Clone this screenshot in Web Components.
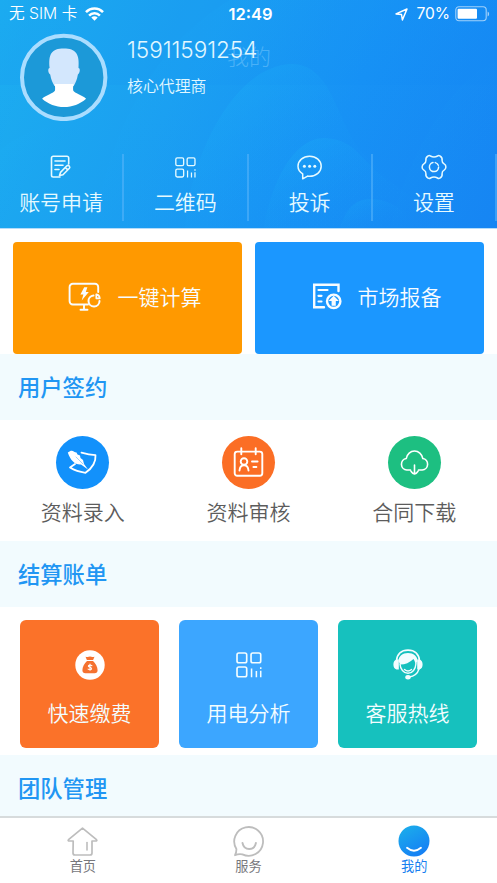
<!DOCTYPE html>
<html lang="zh-CN">
<head>
<meta charset="utf-8">
<title>我的</title>
<style>
html,body{margin:0;padding:0;background:#fff}
body{font-family:"Liberation Sans","Noto Sans CJK SC",sans-serif;width:497px;height:883px;overflow:hidden}
</style>
</head>
<body>
<account-page></account-page>
<script>
const svg = (w, h, vb, body) => `<svg width="${w}" height="${h}" viewBox="${vb}" fill="none" stroke="currentColor" stroke-linecap="round" stroke-linejoin="round">${body}</svg>`;

const qr = `<g stroke-width="1.3"><rect x=".8" y=".8" width="7.6" height="7.6" rx="1.4"/><rect x="11.8" y=".8" width="7.6" height="7.6" rx="1.4"/><rect x=".8" y="11.8" width="7.6" height="7.6" rx="1.4"/></g><path stroke-width="1.2" stroke-linecap="butt" d="M12.2 13v6.8M16 15v4.8M19.4 14.8v5M19.4 12v1.4"/>`;

const ICONS = {
  wifi: svg(19, 14, '0 0 19 14', `<g stroke-width="2.5" stroke-linecap="butt"><path d="M1 5.2C5.6.2 13.4.2 18 5.2"/><path d="M4.1 8.6c3-3.2 7.8-3.2 10.8 0"/></g><path d="M9.5 13.7 6.3 10.5c1.8-1.7 4.6-1.7 6.4 0z" fill="currentColor" stroke="none"/>`),
  locate: svg(13, 13, '0 0 13 13', `<path stroke-width="1.5" d="M1 5.9 12 1 7.4 12 6.5 6.5z"/>`),
  battery: svg(36, 16, '0 0 36 16', `<rect x=".8" y=".8" width="30.4" height="14" rx="3.2" stroke-width="1.1" opacity=".6"/><rect x="2.6" y="2.8" width="19.4" height="10" rx="1" fill="currentColor" stroke="none"/><path d="M32.6 5.4c2 .7 2 4.3 0 5z" fill="currentColor" stroke="none" opacity=".6"/>`),
  avatar: svg(88, 88, '0 0 88 88', `<circle cx="43.7" cy="44.400" r="41.7" fill="#1c99d8" stroke="#aaddff" stroke-width="4"/><g stroke="none" transform="translate(0 1)"><path fill="#d3e7fd" d="M29.6 34c-1.4-14 2-19.5 14.2-19.5S59.7 20 58.5 34c1.9.2 1.7 4.6-.6 6.6-1 5.4-2.3 8.4-4.2 11.4H34.5c-2-3-3.3-6-4.3-11.4-2.4-2-2.5-6.400-.6-6.600z"/><path fill="#fff" d="M34.500 50h19.200c-.6 2-.8 4.500-.5 6.600 1.400 3 8.800 4.200 12.900 8.200-6.200 5.500-13.600 8.300-22 8.300s-15.700-2.800-22-8.300c4.200-4 11.500-5.200 12.900-8.200.3-2 .1-4.600-.5-6.600z"/></g>`),
  form: svg(22, 24, '0 0 22 24', `<g stroke-width="1.6"><path d="M10 22H3.200A1.700 1.700 0 0 1 1.500 20.300V3A1.700 1.700 0 0 1 3.200 1.300H17A1.700 1.700 0 0 1 18.700 3v6"/><path d="M5 6h10M5 10.200h8M5 14.500h4"/><path d="m10.500 17.400 6.400-6.600q1.200-1 2.300.2t.2 2.300L13 19.700l-3.500.9zM15.500 12.700l2.300 2.100"/></g>`),
  qr: svg(21, 21, '0 0 20.4 20.4', qr),
  qrBig: svg(26, 26, '0 0 20.4 20.4', qr),
  chat: svg(25, 25, '0 0 25 25', `<path stroke-width="1.5" d="M5.700 18.900C2.800 17 1 14.500 1 11.200 1 5.600 6 1.200 12.600 1.200S24.200 5.600 24.200 11.200 19.200 21.300 12.600 21.300q-1 0-2-.2l-4.900 2.700z"/><g fill="currentColor" stroke="none"><circle cx="7.400" cy="11.300" r="1.500"/><circle cx="12.600" cy="11.300" r="1.500"/><circle cx="17.800" cy="11.300" r="1.500"/></g>`),
  gear: svg(26, 26, '0 0 26 26', `<g stroke-width="1.500"><path d="M9.500 2Q8.200 1.200 7 2 4.400 3.500 4.900 6.500 5 8.700 2.900 9.800 1.200 10.800 1.100 13T2.900 16.200Q5 17.300 4.900 19.500 4.400 22.500 7 24q1.200.8 2.500 0 3.500-2 7 0 1.300.8 2.500 0 2.600-1.500 2.100-4.500-.1-2.200 2-3.300 1.700-1 1.800-3.200t-1.800-3.200q-2.100-1.100-2-3.300Q21.600 3.500 19 2q-1.200-.8-2.500 0-3.500 2-7 0z"/><path d="M12 8.500A4.600 4.600 0 1 0 17.600 13M14.300 8.600A4.600 4.600 0 0 1 17.300 11.300"/></g>`),
  calc: svg(33, 30, '0 0 33 30', `<g stroke-width="1.900"><path d="M20 22.500H4.800A3.200 3.200 0 0 1 1.600 19.300V5A3.200 3.200 0 0 1 4.800 1.800H27A3.200 3.200 0 0 1 30.200 5v5M16 23v4.500M12.500 27.800h7"/><path stroke-width="2" d="M25.500 13.500a5.500 5.500 0 1 0 6 5.500"/><path stroke-width="1.700" d="M28.300 12.300v4h3.500a4.500 4.500 0 0 0-3.500-4z"/></g><path fill="currentColor" stroke="none" d="M16.200 5.300h3.200l-1.600 4.600h3L13.700 18.500l1.700-6h-3z"/>`),
  report: svg(30, 27, '0 0 30 27', `<g stroke-width="2.400"><path stroke-linejoin="miter" d="M12 24.300H2.200V1.800H26.500V8"/><path stroke-width="2.200" d="M6.500 7H15.500M6.500 12.800h3M6.500 18.500h3"/><circle cx="21.700" cy="18.300" r="6.700"/></g><path fill="currentColor" stroke="none" d="m21.700 12.700 5.200 5.200h-3.100v4.800h-4.200v-4.800h-3.100z"/>`),
  quill: svg(31, 27, '0 0 31 27', `<path stroke-width="1.800" d="M14.500 3.600Q22 5.900 28.500 6.200C29 13 25.500 18.800 18.500 23.800Q9.500 22.500 3 18.500l5-3.500"/><path fill="currentColor" stroke="none" d="M.8 3.500 3.800 1.800C6 1 7.500 3.500 9.500 3.500l1 2 2.500 1 .5 2.500 2.500 2 1 4 4 5.500-7-5c-6 .5-10.500-4-13.200-12z"/><path stroke="#1291fb" stroke-width=".4" d="m9 8 7 7"/>`),
  badge: svg(31, 31, '0 0 31 31', `<rect x="1.700" y="4.600" width="27.600" height="24.200" rx="2.500" stroke-width="1.900"/><path stroke-width="1.900" d="M8.300 1.300v6M22.700 1.300v6M19 14.500h5.600M20.400 20h3"/><circle cx="11" cy="14.500" r="3.300" stroke-width="1.900"/><path stroke-width="1.900" d="M6.500 23.500c.3-3.600 2-5.300 4.500-5.300s4.200 1.700 4.500 5.300"/>`),
  cloud: svg(29, 26, '0 0 29 26', `<path stroke-width="1.600" d="M10.500 20H6.800A5.800 5.800 0 0 1 6.300 8.500C7 4 10.500 1 14.500 1S22 4 22.800 8.500A5.800 5.800 0 0 1 22.200 20H18.500M14.500 15v8.500M11 21.200q1.500 2.300 3.500 2.800 2-.5 3.500-2.800"/>`),
  money: svg(30, 30, '0 0 30 30', `<circle cx="15" cy="15" r="14.700" fill="#fff" stroke="none"/><path fill="#f57230" stroke="none" d="M10.500 6.700q2.200.8 4.500-.1 2.300.9 4.500.1l-1.400 3.200h-6.200zM12 11h6c2.600 2.300 4.600 6 4.600 9.300 0 2-1.100 2.900-3 2.900h-9.200c-1.900 0-3-.9-3-2.900C7.400 17 9.400 13.300 12 11z"/><path stroke="#fff" stroke-width="1.100" d="M16.900 15.700q-1.900-1.300-3.300-.2c-1.300 2 3.500 1.600 3 3.400-.5 1.200-2.200 1-3.500.2M15 14v6.200"/>`),
  support: svg(30, 31, '0 0 30 31', `<path stroke-width="1.800" d="M3.500 12C4 5 8.500 1.200 15 1.200S26 5 26.500 12"/><g fill="currentColor" stroke="none"><path d="M5.500 12.500C5.500 7 9.500 4 15 4s9.500 3 9.500 8.500L22.500 15q-.5-3-2-5-6 5.500-13 5.500z"/><path d="M5.800 10.500v10H3.500Q.4 19.500.4 15.500t3.100-5zM24.200 10.500v10h2.300q3.100-1 3.100-5t-3.100-5z"/><ellipse cx="15" cy="28.200" rx="2.700" ry="2.200"/></g><path stroke-width="1.400" d="M7 15c.3 5 3.500 9.300 8 9.300S22.600 20 23 14.500M26 20c-1.400 4.700-4.500 7.300-10 8M11.500 20.500q3.500 3 7 0"/>`),
  home: svg(31, 29, '0 0 31 29', `<path stroke-width="1.700" d="M6.200 14H1.700q-1-.4-.2-1.300L15.500 1.200l14 11.500q.8.900-.2 1.300H25v12q0 2-2 2H8q-2 0-2-2z"/><path stroke-width="1.600" d="M20 15.500v7.500"/>`),
  service: svg(32, 32, '0 0 32 32', `<path stroke-width="1.800" d="M3.400 24A14.400 14.400 0 1 1 9.400 29.400Q5.700 28.700 2 30.200 3.500 27.400 3.400 24z"/><path stroke-width="1.900" d="M9.500 18c.8 4 3.300 6 6.700 6s6-2 6.700-6"/>`),
  mine: svg(32, 32, '0 0 32 32', `<defs><linearGradient id="g" x1=".2" y1="0" x2=".75" y2="1"><stop stop-color="#1badeb"/><stop offset="1" stop-color="#157df5"/></linearGradient></defs><circle cx="16" cy="16" r="15.500" fill="url(#g)" stroke="none"/><path stroke="#fff" stroke-width="1.800" d="M9 22.800q7 5.800 14 0"/>`)
};

const define = (name, render) => customElements.define(name, class extends HTMLElement {
  constructor() { super(); this.attachShadow({ mode: 'open' }); }
  connectedCallback() { this.shadowRoot.innerHTML = render(this); }
});

define('app-icon', el => `<style>:host{display:inline-flex;flex:none}svg{display:block}</style>${ICONS[el.getAttribute('name')]}`);

define('status-bar', () => `<style>
:host{display:grid;grid-template-columns:1fr auto 1fr;align-items:center;height:28px;padding:0 6px 0 9px;color:#fff;font:16px/28px Inter,"Noto Sans CJK SC",sans-serif}
.l,.r{display:flex;align-items:center}.l app-icon{margin-left:8px}.r{justify-content:flex-end;gap:5px}.l{font-size:15.7px;font-weight:350}
b{font-weight:600;font-size:16.5px;margin-left:1px}.r span{margin-left:4px;font-size:15.6px;letter-spacing:-.1px}
</style><div class="l">无 SIM 卡<app-icon name="wifi"></app-icon></div><b>12:49</b>
<div class="r"><app-icon name="locate"></app-icon><span>70%</span><app-icon name="battery"></app-icon></div>`);

define('user-profile', () => `<style>
:host{display:flex;height:126px;padding:5px 0 0 20px;box-sizing:border-box;color:#e1f7ff}
.t{padding:3px 0 0 19px}.n{font:300 22.5px/27px Inter,sans-serif;letter-spacing:-.02px;white-space:nowrap}
.d{font:350 15.9px/24px "Noto Sans CJK SC",sans-serif;margin-top:11px}
</style><app-icon name="avatar"></app-icon><div class="t"><div class="n"><slot name="phone"></slot></div><div class="d"><slot name="role"></slot></div></div>`);

define('action-item', el => `<style>
:host{flex:1;display:flex;flex-direction:column;align-items:center;height:67px;box-sizing:border-box;border-right:2px solid #5bb5fa90;color:#e6faff}
.i{height:26px;display:flex;align-items:center}
.l{font:350 21px/30px "Noto Sans CJK SC",sans-serif;margin-top:6px}
</style><div class="i"><app-icon name="${el.getAttribute('icon')}"></app-icon></div><div class="l"><slot></slot></div>`);

define('profile-header', () => `<style>
:host{display:block;position:relative;height:228px;overflow:hidden;background:linear-gradient(115deg,#1caeef 0%,#1b9ff1 36%,#1791f5 66%,#1685f3 100%);border-bottom:1px solid #b4dcfa;box-sizing:content-box;margin-bottom:-1px}
.bg{position:absolute;inset:0}.veil{position:absolute;inset:0 0 auto;height:85px;background:#1886f018}
.c{position:relative}.row{display:flex}
.title{position:absolute;top:42px;left:227px;font:300 22px/26px "Noto Sans CJK SC",sans-serif;color:#8fd3ff;opacity:.42}
</style>
<svg class="bg" width="497" height="228" viewBox="0 0 497 228"><defs><linearGradient id="w" x1="0" y1="0" x2=".85" y2=".8"><stop stop-color="#1db9f7" stop-opacity=".36"/><stop offset="1" stop-color="#178ff6" stop-opacity="0"/></linearGradient></defs>
<g fill="url(#w)"><path d="M-5 170C10 100 40 20 120-5H-5z" opacity=".4"/><path d="M94 228C105 150 145 50 230 0H500V228z" opacity=".5"/><path d="M185 228C190 155 235 65 292 64 335 65 335 125 365 155S420 210 440 228z"/><path d="M264 228C270 190 290 138 325 138 360 140 360 165 397 186L450 228z" opacity=".8"/><path d="M340 228C345 210 355 199 370 199 390 199 405 210 417 228z" opacity=".7"/><path d="M0 150Q45 115 80 132 40 145 0 228z" opacity=".4"/><path d="M390 228C405 165 450 75 500 60V228z" opacity=".25"/></g></svg>
<div class="veil"></div><div class="title">我的</div>
<div class="c"><status-bar></status-bar>
<user-profile><span slot="phone">15911591254</span><span slot="role">核心代理商</span></user-profile>
<div class="row"><action-item icon="form">账号申请</action-item><action-item icon="qr">二维码</action-item><action-item icon="chat">投诉</action-item><action-item icon="gear">设置</action-item></div></div>`);

define('quick-tile', el => `<style>
:host{flex:1;height:112px;box-sizing:border-box;border-radius:4px;background:${el.getAttribute('color')};display:flex;align-items:center;justify-content:center;gap:${el.getAttribute('gap')}px;color:#f8fcff;font:350 21px/30px "Noto Sans CJK SC",sans-serif;padding:0 0 3px 14px}
span{padding-bottom:2px}
</style><app-icon name="${el.getAttribute('icon')}"></app-icon><span><slot></slot></span>`);

define('section-title', () => `<style>
:host{display:flex;align-items:center;height:66px;box-sizing:border-box;padding:0 0 2px 18px;background:#f2fbfe;color:#2196f3;font:500 22.3px/32px "Noto Sans CJK SC",sans-serif}
</style><slot></slot>`);

define('round-link', el => `<style>
:host{flex:1;display:flex;flex-direction:column;align-items:center;color:#5c5c5c;font:350 21px/30px "Noto Sans CJK SC",sans-serif}
.o{width:53px;height:53px;border-radius:50%;display:flex;align-items:center;justify-content:center;background:${el.getAttribute('color')};color:#fff;margin-bottom:7px}
</style><div class="o"><app-icon name="${el.getAttribute('icon')}"></app-icon></div><slot></slot>`);

define('bill-tile', el => `<style>
:host{flex:1;height:128px;border-radius:6px;box-sizing:border-box;padding-top:29px;background:${el.getAttribute('color')};display:flex;flex-direction:column;align-items:center;color:#f3fdff;font:350 21px/30px "Noto Sans CJK SC",sans-serif}
.i{height:31px;display:flex;align-items:center;margin-bottom:17px}
</style><div class="i"><app-icon name="${el.getAttribute('icon')}"></app-icon></div><slot></slot>`);

define('tab-item', el => `<style>
:host{flex:1;display:flex;flex-direction:column;align-items:center;color:${el.hasAttribute('active') ? '#197ff0' : '#77777c'};font:13.2px/18px "Noto Sans CJK SC",sans-serif}
.i{height:32px;display:flex;align-items:center;color:#bdbdbd}
</style><div class="i"><app-icon name="${el.getAttribute('icon')}"></app-icon></div><slot></slot>`);

define('tab-bar', () => `<style>
:host{display:flex;height:58px;border-top:2px solid #d7dbdc;background:#fff;padding-top:7px;box-sizing:content-box}
</style><slot></slot>`);

define('account-page', () => `<style>
:host{display:flex;flex-direction:column;width:497px;height:883px;background:#fff}
.quick{display:flex;gap:13px;padding:14px 13px 0}
.links{display:flex;height:105px;padding-top:16px}
.bills{display:flex;gap:20px;padding:13px 20px 7px}
main{height:588px;overflow:hidden}
profile-header,main,tab-bar{flex:none}
</style>
<profile-header></profile-header>
<main>
<div class="quick"><quick-tile icon="calc" color="#ff9900" gap="17">一键计算</quick-tile><quick-tile icon="report" color="#1b97ff" gap="16">市场报备</quick-tile></div>
<section-title>用户签约</section-title>
<div class="links"><round-link icon="quill" color="#1291fb">资料录入</round-link><round-link icon="badge" color="#fb6e25">资料审核</round-link><round-link icon="cloud" color="#1dbf81">合同下载</round-link></div>
<section-title>结算账单</section-title>
<div class="bills"><bill-tile icon="money" color="#fb7229">快速缴费</bill-tile><bill-tile icon="qrBig" color="#3ca6ff">用电分析</bill-tile><bill-tile icon="support" color="#16c1be">客服热线</bill-tile></div>
<section-title>团队管理</section-title>
</main>
<tab-bar><tab-item icon="home">首页</tab-item><tab-item icon="service">服务</tab-item><tab-item icon="mine" active>我的</tab-item></tab-bar>`);
</script>
</body>
</html>
